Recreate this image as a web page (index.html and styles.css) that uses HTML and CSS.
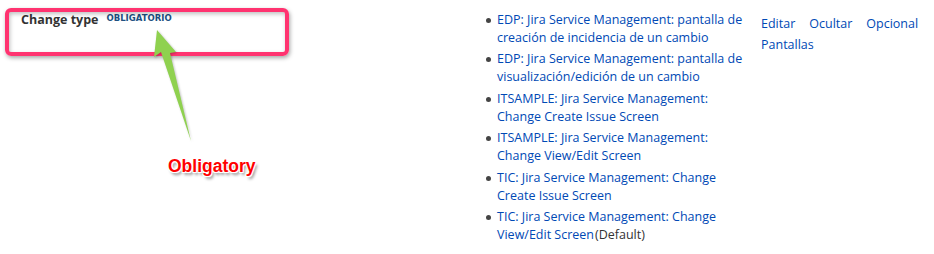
FILE: index.html
```html
<!DOCTYPE html>
<html>
<head>
  <meta name="viewport" content="width=device-width, initial-scale=1.0">
  <link rel="stylesheet" href="styles.css">
</head>
<body>
  <div class="field-row">
    <div class="field-cell">
      <div class="field-name">
        <span class="name">Change type</span>
        <span class="required">Obligatorio</span>
      </div>
      <div class="highlight"></div>
      <svg class="arrow" width="60" height="130" viewBox="0 0 60 130">
        <polygon points="17,10 36,32 30,33 51,121 21,32 14,37" fill="#8fd14f" />
      </svg>
      <div class="callout">Obligatory</div>
    </div>

    <div class="screens-cell">
      <ul class="screens">
        <li><a href="#">EDP: Jira Service Management: pantalla de creación de incidencia de un cambio</a></li>
        <li><a href="#">EDP: Jira Service Management: pantalla de visualización/edición de un cambio</a></li>
        <li><a href="#">ITSAMPLE: Jira Service Management: Change Create Issue Screen</a></li>
        <li><a href="#">ITSAMPLE: Jira Service Management: Change View/Edit Screen</a></li>
        <li><a href="#">TIC: Jira Service Management: Change Create Issue Screen</a></li>
        <li><a href="#">TIC: Jira Service Management: Change View/Edit Screen</a><span class="default">(Default)</span></li>
      </ul>
    </div>

    <div class="ops-cell">
      <a href="#">Editar</a>
      <a href="#">Ocultar</a>
      <a href="#">Opcional</a>
      <a href="#">Pantallas</a>
    </div>
  </div>
</body>
</html>
```

FILE: styles.css
```css
* {
  margin: 0;
  padding: 0;
  box-sizing: border-box;
}

body {
  background: #fff;
  font-family: 'Open Sans', 'Noto Sans', sans-serif;
  font-size: 12.5px;
  color: #333;
  width: 934px;
  height: 254px;
  overflow: hidden;
}

a {
  color: #0049b5;
  text-decoration: none;
}

.field-row {
  display: grid;
  grid-template-columns: 486px 275px 1fr;
  height: 254px;
}

.field-cell {
  position: relative;
  padding: 11px 0 0 21px;
}

.field-name {
  display: flex;
  align-items: baseline;
  gap: 8px;
}

.name {
  font-weight: bold;
  font-size: 12.5px;
  color: #333;
}

.required {
  font-family: 'DejaVu Sans', sans-serif;
  font-size: 8.5px;
  font-weight: bold;
  text-transform: uppercase;
  color: #205081;
  position: relative;
  top: -3px;
}

.highlight {
  position: absolute;
  left: 5px;
  top: 8px;
  width: 284px;
  height: 48px;
  border: 4px solid #ff3370;
  border-radius: 6px;
  box-shadow: 1px 2px 4px rgba(0, 0, 0, 0.35), inset 1px 2px 4px rgba(0, 0, 0, 0.25);
}

.arrow {
  position: absolute;
  left: 140px;
  top: 20px;
  filter: drop-shadow(1px 1px 1px rgba(0, 0, 0, 0.25));
}

.callout {
  position: absolute;
  left: 168px;
  top: 156px;
  font-family: 'Liberation Sans', Arial, sans-serif;
  font-size: 17.5px;
  font-weight: bold;
  color: #ff0000;
  text-shadow: -1px -1px 0 #fff, 1px -1px 0 #fff, -1px 1px 0 #fff, 1px 1px 0 #fff,
    2px 3px 3px rgba(0, 0, 0, 0.45);
}

.screens-cell {
  padding-top: 11px;
}

.screens {
  list-style: none;
  width: 262px;
}

.screens li {
  position: relative;
  padding-left: 11px;
  line-height: 18px;
  margin-bottom: 3.4px;
}

.screens li::before {
  content: '';
  position: absolute;
  left: 0;
  top: 7px;
  width: 5px;
  height: 5px;
  border-radius: 50%;
  background: #444;
}

.default {
  margin-left: 1px;
}

.ops-cell {
  padding-top: 15px;
  display: flex;
  flex-wrap: wrap;
  align-content: flex-start;
  column-gap: 14px;
  row-gap: 3px;
  width: 165px;
  line-height: 18px;
}
```
